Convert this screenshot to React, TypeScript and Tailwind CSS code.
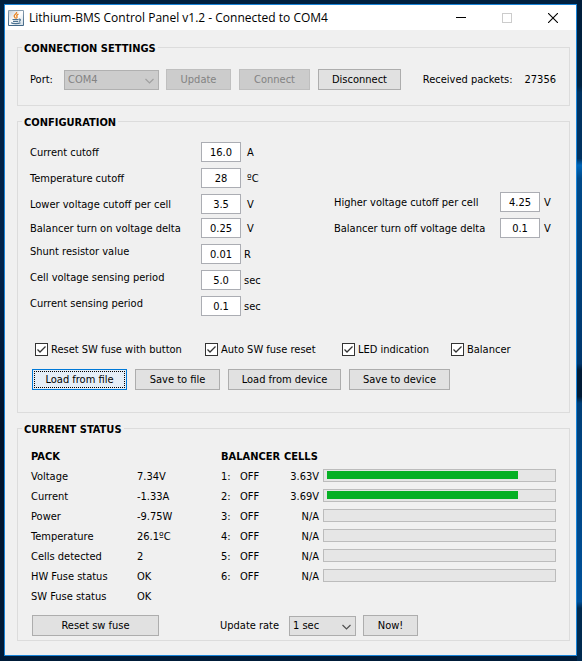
import type { ReactNode } from "react";

type Setting = { id: string; label: string; value: string; unit: string };

const limits: Setting[] = [
  { id: "current-cutoff", label: "Current cutoff", value: "16.0", unit: "A" },
  { id: "temperature-cutoff", label: "Temperature cutoff", value: "28", unit: "ºC" },
  { id: "lower-voltage", label: "Lower voltage cutoff per cell", value: "3.5", unit: "V" },
];

const balancerOn: Setting[] = [
  { id: "balancer-on", label: "Balancer turn on voltage delta", value: "0.25", unit: "V" },
];

const sensing: Setting[] = [
  { id: "shunt", label: "Shunt resistor value", value: "0.01", unit: "R" },
  { id: "cell-period", label: "Cell voltage sensing period", value: "5.0", unit: "sec" },
  { id: "current-period", label: "Current sensing period", value: "0.1", unit: "sec" },
];

const upper: Setting[] = [
  { id: "higher-voltage", label: "Higher voltage cutoff per cell", value: "4.25", unit: "V" },
  { id: "balancer-off", label: "Balancer turn off voltage delta", value: "0.1", unit: "V" },
];

const pack = [
  ["Voltage", "7.34V"],
  ["Current", "-1.33A"],
  ["Power", "-9.75W"],
  ["Temperature", "26.1ºC"],
  ["Cells detected", "2"],
  ["HW Fuse status", "OK"],
  ["SW Fuse status", "OK"],
];

const cells = [
  { balancer: "OFF", voltage: "3.63V", level: 85 },
  { balancer: "OFF", voltage: "3.69V", level: 85 },
  { balancer: "OFF", voltage: "N/A", level: 0 },
  { balancer: "OFF", voltage: "N/A", level: 0 },
  { balancer: "OFF", voltage: "N/A", level: 0 },
  { balancer: "OFF", voltage: "N/A", level: 0 },
];

function JavaIcon() {
  return (
    <svg className="size-4 shrink-0" viewBox="0 0 16 16" aria-hidden="true">
      <defs>
        <linearGradient id="java-bg" x1="0" y1="0" x2="0" y2="1">
          <stop offset="0" stopColor="#8a9fb0" />
          <stop offset="1" stopColor="#3f6585" />
        </linearGradient>
        <linearGradient id="java-face" x1="0" y1="0" x2="1" y2="1">
          <stop offset="0" stopColor="#c6d0d8" />
          <stop offset="0.5" stopColor="#ffffff" />
          <stop offset="1" stopColor="#d3dee6" />
        </linearGradient>
      </defs>
      <rect width="16" height="16" rx="1" fill="url(#java-bg)" />
      <rect x="1" y="1" width="14" height="14" fill="url(#java-face)" />
      <path d="M8.600 2C9.300 4 5.600 4.600 6.200 6.400 6.500 7.300 7.400 7.600 7.500 8.600M10.400 4.200C8.600 5 8.400 5.600 9 6.600 9.400 7.400 8.900 8 8.300 8.500" fill="none" stroke="#e8821e" strokeWidth="1.300" />
      <path d="M4.500 9.500H10.500M5 11.300H10M10.800 9.200C13 8.900 12.800 10.900 10.800 11.300M3 12.800C5 13.900 10.500 13.900 12.500 12.700" fill="none" stroke="#4c7391" strokeWidth="1.200" />
    </svg>
  );
}

function Group({ title, className, children }: { title: string; className: string; children: ReactNode }) {
  return (
    <fieldset className={`border border-[#dcdcdc] ${className}`}>
      <legend className="ml-1 h-[13px] px-[2px] text-[11px] leading-[15px] font-bold">{title}</legend>
      {children}
    </fieldset>
  );
}

function Button({ className, disabled, children }: { className: string; disabled?: boolean; children: ReactNode }) {
  return (
    <button
      type="button"
      disabled={disabled}
      className={`h-[21px] shrink-0 border border-[#adadad] bg-[#e1e1e1] leading-4 disabled:border-[#bfbfbf] disabled:bg-[#cccccc] disabled:text-[#838383] ${className}`}
    >
      {children}
    </button>
  );
}

function Combo({ id, value, className, disabled }: { id: string; value: string; className: string; disabled?: boolean }) {
  return (
    <div className={`relative shrink-0 ${className}`}>
      <select
        id={id}
        disabled={disabled}
        defaultValue={value}
        className="block h-5 w-full appearance-none border border-[#adadad] bg-[#e1e1e1] pl-[3px] leading-4 opacity-100 disabled:border-[#b0b0b0] disabled:bg-[#cccccc] disabled:text-[#838383]"
      >
        <option>{value}</option>
      </select>
      <svg
        className={`pointer-events-none absolute top-2 right-[5px] h-[6px] w-[9px] ${disabled ? "text-[#a0a0a0]" : "text-[#505050]"}`}
        viewBox="0 0 9 6"
        aria-hidden="true"
      >
        <path d="M.5 1 4.500 5 8.500 1" fill="none" stroke="currentColor" strokeWidth="1.200" />
      </svg>
    </div>
  );
}

function Field({ id, value }: { id: string; value: string }) {
  return (
    <input
      id={id}
      type="text"
      defaultValue={value}
      className="h-5 w-10 shrink-0 border border-[#abadb3] bg-white text-center leading-4"
    />
  );
}

function Check({ label, className }: { label: string; className: string }) {
  return (
    <label className={`flex items-center gap-[3px] ${className}`}>
      <span className="grid size-[13px] shrink-0">
        <input type="checkbox" defaultChecked className="peer col-start-1 row-start-1 size-[13px] appearance-none border border-[#333333] bg-white" />
        <svg className="pointer-events-none invisible col-start-1 row-start-1 size-[13px] peer-checked:visible" viewBox="0 0 13 13" aria-hidden="true">
          <path d="M2.500 6.500 5 9 10.500 3.500" fill="none" stroke="#333333" strokeWidth="1.300" />
        </svg>
      </span>
      {label}
    </label>
  );
}

export default function App() {
  return (
    <div className="min-h-screen bg-[linear-gradient(#001d3a_0%,#002443_13%,#003261_14%,#003261_24%,#0066b8_25%,#004a8a_27%,#00376d_55%,#001b36_56%,#001b36_60%,#003f78_61%,#00519a_91%,#002a50_92%,#002a50_100%),linear-gradient(#00203f,#00224a_40%,#001128_65%,#001b38)] bg-[length:5px_100%,100%_100%] bg-[position:right_top,left_top] bg-no-repeat pt-1 pr-[5px] pb-[5px] pl-1 font-['DejaVu_Sans_Condensed','DejaVu_Sans',sans-serif] text-[11px] leading-[17px] text-black">
      <div className="border border-[#1883d7] bg-[#f0f0f0]">
        <header className="flex h-[25px] items-center bg-white pl-[3px]">
          <JavaIcon />
          <h1 className="ml-[5px] grow font-['Open_Sans',sans-serif] text-[12px] leading-4">
            Lithium-BMS Control Panel v1.2 - Connected to COM4
          </h1>
          <button type="button" aria-label="Minimize" className="grid h-full w-[46px] place-items-center">
            <svg className="size-[10px]" viewBox="0 0 10 10"><path d="M0 4.500H10" stroke="#000" /></svg>
          </button>
          <button type="button" aria-label="Maximize" disabled className="grid h-full w-[46px] place-items-center">
            <svg className="size-[10px]" viewBox="0 0 10 10"><rect x=".5" y=".5" width="9" height="9" fill="none" stroke="#cccccc" /></svg>
          </button>
          <button type="button" aria-label="Close" className="grid h-full w-[46px] place-items-center">
            <svg className="size-[10px]" viewBox="0 0 10 10"><path d="M0 0 10 10M10 0 0 10" stroke="#000" strokeWidth="1.100" /></svg>
          </button>
        </header>

        <main className="flex flex-col gap-[9px] pt-[11px] pr-[6px] pb-[14px] pl-3">
          <Group title="CONNECTION SETTINGS" className="pb-[15px]">
            <div className="flex items-center pt-[15px] pr-[13px] pl-3">
              <label htmlFor="port" className="w-[34px] shrink-0">Port:</label>
              <Combo id="port" value="COM4" disabled className="mr-[7px] w-[95px]" />
              <div className="flex gap-2">
                <Button disabled className="w-[65px]">Update</Button>
                <Button disabled className="w-[71px]">Connect</Button>
                <Button className="w-[83px]">Disconnect</Button>
              </div>
              <p className="ml-auto flex gap-3 whitespace-nowrap">
                <span>Received packets:</span>
                <output>27356</output>
              </p>
            </div>
          </Group>

          <Group title="CONFIGURATION" className="pb-[22px]">
            <div className="flex justify-between pt-[14px] pr-[13px] pl-3">
              <div className="flex flex-col gap-1">
                <div className="flex flex-col gap-[6px]">
                  {limits.map((s) => (
                    <div key={s.id} className="flex items-center">
                      <label htmlFor={s.id} className="w-[171px]">{s.label}</label>
                      <Field id={s.id} value={s.value} />
                      <span className="ml-[6px]">{s.unit}</span>
                    </div>
                  ))}
                </div>
                <div className="flex flex-col gap-[6px]">
                  {balancerOn.map((s) => (
                    <div key={s.id} className="flex items-center">
                      <label htmlFor={s.id} className="w-[171px]">{s.label}</label>
                      <Field id={s.id} value={s.value} />
                      <span className="ml-[6px]">{s.unit}</span>
                    </div>
                  ))}
                  {sensing.map((s) => (
                    <div key={s.id} className="flex items-start">
                      <label htmlFor={s.id} className="w-[171px] leading-4">{s.label}</label>
                      <Field id={s.id} value={s.value} />
                      <span className="ml-[3px] self-center">{s.unit}</span>
                    </div>
                  ))}
                </div>
              </div>
              <div className="flex flex-col gap-[6px] pt-[50px]">
                {upper.map((s) => (
                  <div key={s.id} className="flex items-center">
                    <label htmlFor={s.id} className="w-[166px]">{s.label}</label>
                    <Field id={s.id} value={s.value} />
                    <span className="ml-1 w-3">{s.unit}</span>
                  </div>
                ))}
              </div>
            </div>

            <div className="mt-[25px] flex pl-[17px]">
              <Check label="Reset SW fuse with button" className="w-[170px]" />
              <Check label="Auto SW fuse reset" className="w-[137px]" />
              <Check label="LED indication" className="w-[109px]" />
              <Check label="Balancer" className="w-[80px]" />
            </div>

            <div className="mt-[11px] flex gap-2 pl-[14px]">
              <button
                type="button"
                className="h-[21px] w-[95px] shrink-0 border border-[#0078d7] bg-[#e5eef7] p-px leading-[15px]"
              >
                <span className="block border border-dotted border-black">Load from file</span>
              </button>
              <Button className="w-[85px]">Save to file</Button>
              <Button className="w-[113px]">Load from device</Button>
              <Button className="w-[101px]">Save to device</Button>
            </div>
          </Group>

          <Group title="CURRENT STATUS" className="pb-1">
            <div className="flex pt-[11px] pr-[13px] pl-[13px]">
              <table className="w-[190px] shrink-0 table-fixed">
                <colgroup>
                  <col className="w-[106px]" />
                  <col />
                </colgroup>
                <thead>
                  <tr className="h-5 text-left">
                    <th scope="col" colSpan={2} className="p-0">PACK</th>
                  </tr>
                </thead>
                <tbody>
                  {pack.map(([name, value]) => (
                    <tr key={name} className="h-5">
                      <th scope="row" className="p-0 text-left font-normal">{name}</th>
                      <td className="p-0">{value}</td>
                    </tr>
                  ))}
                </tbody>
              </table>
              <table className="w-full table-fixed self-start">
                <colgroup>
                  <col className="w-[19px]" />
                  <col className="w-[44px]" />
                  <col className="w-[35px]" />
                  <col />
                </colgroup>
                <thead>
                  <tr className="h-5 text-left">
                    <th scope="col" colSpan={2} className="p-0">BALANCER</th>
                    <th scope="col" colSpan={2} className="p-0">CELLS</th>
                  </tr>
                </thead>
                <tbody>
                  {cells.map((cell, i) => (
                    <tr key={i} className="h-5">
                      <th scope="row" className="p-0 text-left font-normal">{i + 1}:</th>
                      <td className="p-0">{cell.balancer}</td>
                      <td className="p-0 text-right">{cell.voltage}</td>
                      <td className="pt-[3px] pl-1 align-top">
                        <div
                          role="progressbar"
                          aria-label={`Cell ${i + 1}`}
                          aria-valuenow={cell.level}
                          className="h-[13px] border border-[#bcbcbc] bg-[#e6e6e6] px-[3px] pt-px"
                        >
                          <div className="h-2 bg-[#06b025]" style={{ width: `${cell.level}%` }} />
                        </div>
                      </td>
                    </tr>
                  ))}
                </tbody>
              </table>
            </div>

            <div className="mt-[9px] flex items-center pl-[14px]">
              <Button className="mr-[61px] w-[127px]">Reset sw fuse</Button>
              <label htmlFor="rate" className="w-[69px] shrink-0">Update rate</label>
              <Combo id="rate" value="1 sec" className="mr-[7px] w-[67px]" />
              <Button className="w-[55px]">Now!</Button>
            </div>
          </Group>
        </main>
      </div>
    </div>
  );
}
